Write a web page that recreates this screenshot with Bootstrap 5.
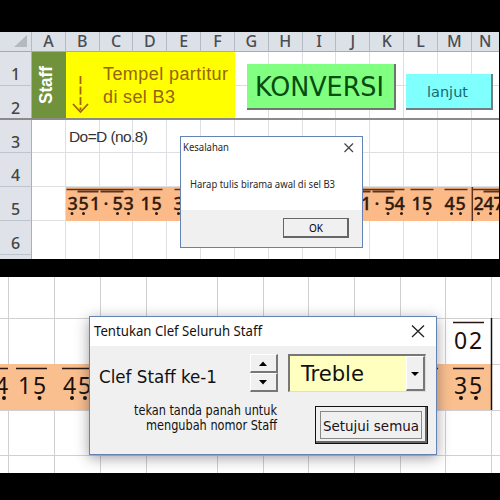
<!DOCTYPE html>
<html lang="id">
<head>
<meta charset="utf-8">
<meta name="viewport" content="width=device-width, initial-scale=1">
<title>Konversi partitur</title>
<link rel="stylesheet" href="https://cdn.jsdelivr.net/npm/bootstrap@5.3.0/dist/css/bootstrap.min.css">
<style>
body{width:500px;height:500px;background:#000;overflow:hidden;font-family:"DejaVu Sans Condensed","DejaVu Sans",sans-serif;color:#222;line-height:1.2}
svg{display:block}
svg text{white-space:pre}
.stage{width:500px;height:500px;padding-top:32px}
.sheet-top{width:499px;height:227px;background:#fff;display:grid;grid-template-columns:32px repeat(14,33.83px);grid-template-rows:20px repeat(6,33.75px) 5px}
.hd{background:#dce1e7;border-right:1px solid #b4bbc4;border-bottom:1px solid #a4abb5;font:500 16px/18px "Noto Sans",sans-serif;color:#4a4d53;text-align:center}
.hd:nth-child(15){padding-right:7px;border-right:0}
.rw{background:#dfe3e9;border-right:1px solid #a9b0ba;border-bottom:1px solid #bdc4cd;font:500 16px/20px "Noto Sans",sans-serif;color:#444;text-align:center;padding-top:12px}
.gridlines{grid-column:2/-1;grid-row:2/-1;background:repeating-linear-gradient(90deg,transparent 0 32.83px,#dedfe3 32.83px 33.83px),repeating-linear-gradient(180deg,transparent 0 32.75px,#dedfe3 32.75px 33.75px)}
.freeze{grid-column:1/-1;grid-row:3;align-self:end;height:1.5px;background:#8a8a8a;z-index:1}
.staff{grid-column:2;grid-row:2/4;background:#71923c;color:#fff}
.paste{grid-column:3/8;grid-row:2/4;background:#ff0;color:#95650a}
.notes-top{grid-column:3/-1;grid-row:6;background:#fcba88}
.actions{grid-column:8/-1;grid-row:2/4}
.btn-konv{width:149px;height:46px;margin:12px 0 0 12px;background:#80ff80;border:solid #6f756d;border-width:0 2px 2px 0}
.btn-next{width:87px;height:36px;margin:22px 0 0 10px;background:#80ffff;border:solid #6e8084;border-width:0 2px 2px 0}
.dlg{border:1px solid #6482b4;background:#f0f0f0}
.dlg-error{left:180px;top:136px;width:183px;height:112px}
.dlg-clef{left:89px;top:316px;width:348px;height:139px;box-shadow:0 3px 13px rgba(40,40,50,.45)}
.sheet-bottom{width:500px;height:196px;margin-top:18px;background:#fff;overflow:hidden}
.bevel{background:#f0f0f0;border:solid;border-width:1px 2px 2px 1px;border-color:#fff #777 #777 #fff}
.msg-ok{width:66px;height:20px;margin:8px 13px 0 auto;border-color:#666}
.spin{width:28px;height:38px;margin-left:32px}
.combo{width:138px;height:38px;margin-left:10px;background:#ffffc0;border:solid;border-width:2px 1px 1px 2px;border-color:#777 #ddd #ddd #777}
.accept{width:113px;height:38px;margin-left:37px;margin-top:6px;background:#f0f0f0;border:1px solid #111;box-shadow:inset -2px -2px #666}
</style>
<script src="https://cdn.jsdelivr.net/npm/bootstrap@5.3.0/dist/js/bootstrap.bundle.min.js"></script>
</head>
<body>
<main class="stage position-relative">
  <section class="sheet-top overflow-hidden">
    <div class="hd"><svg width="31" height="19"><path d="M14 15L27 3V15Z" fill="#b5b9bf"/></svg></div>
    <div class="hd">A</div><div class="hd">B</div><div class="hd">C</div><div class="hd">D</div><div class="hd">E</div><div class="hd">F</div><div class="hd">G</div><div class="hd">H</div><div class="hd">I</div><div class="hd">J</div><div class="hd">K</div><div class="hd">L</div><div class="hd">M</div><div class="hd">N</div>
    <div class="rw" style="grid-row:2;grid-column:1">1</div><div class="rw" style="grid-row:3;grid-column:1">2</div><div class="rw" style="grid-row:4;grid-column:1">3</div><div class="rw" style="grid-row:5;grid-column:1">4</div><div class="rw" style="grid-row:6;grid-column:1">5</div><div class="rw" style="grid-row:7;grid-column:1">6</div><div class="rw" style="grid-row:8;grid-column:1"></div>
    <div class="gridlines"></div>
    <div class="staff"><svg width="33" height="67"><text transform="translate(20 52) rotate(-90)" font-family="Liberation Sans" font-weight="bold" font-size="18" fill="#fff" textLength="38" lengthAdjust="spacingAndGlyphs">Staff</text></svg></div>
    <div class="paste d-flex">
      <svg width="36" height="67" fill="none" stroke="#a3620c" stroke-width="1.8"><path d="M14.500 24V58" stroke-dasharray="8 2.500"/><path d="M7 52L14.500 60L22 52"/></svg>
      <svg width="134" height="67" fill="#95650a" font-family="Liberation Sans" font-size="18"><text x="1" y="28" textLength="125">Tempel partitur</text><text x="1" y="51" textLength="72">di sel B3</text></svg>
    </div>
    <div class="actions d-flex">
      <div class="btn-konv"><svg width="147" height="44"><text x="8" y="32" font-family="DejaVu Sans Condensed" font-size="26" fill="#064d10" textLength="129" lengthAdjust="spacingAndGlyphs">KONVERSI</text></svg></div>
      <div class="btn-next"><svg width="85" height="34"><text x="21" y="23" font-family="DejaVu Sans" font-size="14" fill="#176a70" textLength="41" lengthAdjust="spacingAndGlyphs">lanjut</text></svg></div>
    </div>
    <div class="freeze"></div>
    <div style="grid-column:3/6;grid-row:4"><svg width="100" height="32"><text x="3" y="22" font-family="Liberation Sans" font-size="15.500" fill="#333" textLength="79">Do=D (no.8)</text></svg></div>
    <div class="notes-top">
      <svg width="434" height="34" viewBox="65.500 187 434 34" fill="#2e190d" font-family="Noto Sans" font-weight="500" font-size="18">
        <g fill="none" stroke="#5a3420" stroke-width="1.500"><path d="M66 189.500H133M139 189.500H162M174 189.500H190M360 189.500H404M410 189.500H433M444 189.500H467M472 189.500H500"/><path stroke-width="2.200" d="M77 191.500H98M100 191.500H123M360 191.500H370M372 191.500H394M483 191.500H500"/><path d="M471.800 187V221"/></g>
        <g stroke="#2e190d" stroke-width=".3"><text y="210" x="67 78 89.500 103 112 123">351·53</text><text y="210" x="140 151">15</text><text y="210" x="173">3</text><text y="210" x="360.500 374 384 394">1·54</text><text y="210" x="411 421.500">15</text><text y="210" x="444 455">45</text><text y="210" x="473 483 493">247</text></g>
        <path d="M71.500 213.500h0M83 213.500h0M117 213.500h0M128 213.500h0M156 213.500h0M178 213.500h0M387.500 213.500h0M401 213.500h0M427 213.500h0M451 213.500h0M460 213.500h0M478 213.500h0M490 213.500h0" stroke="#2e190d" stroke-width="3" stroke-linecap="round"/>
      </svg>
    </div>
  </section>

  <section class="sheet-bottom">
    <svg width="500" height="196" viewBox="0 277 500 196" font-family="Noto Sans" font-size="23" fill="#1b100d">
      <path d="M8.500 277V473M54.500 277V473M100.500 277V473M146.500 277V473M217.500 277V473M263.500 277V473M308.500 277V473M354.500 277V473M400.500 277V473M445.500 277V473M491.500 277V473M0 318.500H500M0 364.500H500M0 410.500H500M0 455.500H500" stroke="#d0d0d2"/>
      <path d="M0 364H491V410H0Z" fill="#fabf8f"/>
      <path d="M0 368.500H8M16 368.500H47M62 368.500H92M430 368.500H438M453 368.500H484M453 322.500H484" stroke="#2a1510" stroke-width="1.400"/>
      <path d="M491.500 318V410" stroke="#111" stroke-width="1.500"/>
      <text y="394" x="-5">4</text><text y="394" x="18 33">15</text><text y="394" x="63 78">45</text><text y="349" x="454 469">02</text><text y="394" x="454 469">35</text>
      <path d="M4 398h0M39.500 398h0M72 398h0M85 398h0M461 398h0M476 398h0" stroke="#1b100d" stroke-width="4" stroke-linecap="round"/>
    </svg>
  </section>

  <section class="dlg dlg-error position-absolute d-flex flex-column">
    <div class="bg-white">
      <svg width="181" height="73" fill="#282828" font-family="Noto Sans" font-size="10"><text x="2" y="14" textLength="46" lengthAdjust="spacingAndGlyphs">Kesalahan</text><text x="9" y="51" textLength="145" lengthAdjust="spacingAndGlyphs">Harap tulis birama awal di sel B3</text><path d="M163.500 6.500L172 15M172 6.500L163.500 15" stroke="#444" stroke-width="1.200"/></svg>
    </div>
    <div class="bevel msg-ok"><svg width="63" height="17"><text x="25" y="12.500" font-family="Noto Sans" font-size="10" textLength="14" lengthAdjust="spacingAndGlyphs">OK</text></svg></div>
  </section>

  <section class="dlg dlg-clef position-absolute">
    <div class="bg-white"><svg width="346" height="29" fill="#111" font-family="Noto Sans" font-size="14"><text x="4" y="18.500" textLength="168" lengthAdjust="spacingAndGlyphs">Tentukan Clef Seluruh Staff</text><path d="M322 8.500L334 20M334 8.500L322 20" stroke="#222" stroke-width="1.300"/></svg></div>
    <div class="d-flex pt-2">
      <svg width="128" height="46" fill="#111" font-family="DejaVu Sans Condensed" font-size="18"><text x="9" y="29" textLength="118" lengthAdjust="spacingAndGlyphs">Clef Staff ke-1</text></svg>
      <div class="spin d-flex flex-column">
        <div class="bevel h-50"><svg width="25" height="16"><path d="M8 11L12 6.500L16 11Z"/></svg></div>
        <div class="bevel h-50"><svg width="25" height="16"><path d="M8 6H16L12 10.500Z"/></svg></div>
      </div>
      <div class="combo d-flex">
        <svg width="116" height="35" fill="#111" font-family="DejaVu Sans Condensed" font-size="21.500"><text x="11" y="25" textLength="63" lengthAdjust="spacingAndGlyphs">Treble</text></svg>
        <div class="bevel flex-grow-1"><svg width="16" height="32"><path d="M4 15H12L8 19Z"/></svg></div>
      </div>
    </div>
    <div class="d-flex">
      <svg width="188" height="46" fill="#111" font-family="DejaVu Sans Condensed" font-size="13.500"><text x="44" y="14.500" textLength="143" lengthAdjust="spacingAndGlyphs">tekan tanda panah untuk</text><text x="56" y="30" textLength="131" lengthAdjust="spacingAndGlyphs">mengubah nomor Staff</text></svg>
      <div class="accept"><svg width="111" height="36"><rect x="4.500" y="4.500" width="101" height="27" fill="none" stroke="#222" stroke-dasharray="1 1"/><text x="7" y="24" fill="#201020" font-family="DejaVu Sans Condensed" font-size="14.500" textLength="96" lengthAdjust="spacingAndGlyphs">Setujui semua</text></svg></div>
    </div>
  </section>
</main>
</body>
</html>
